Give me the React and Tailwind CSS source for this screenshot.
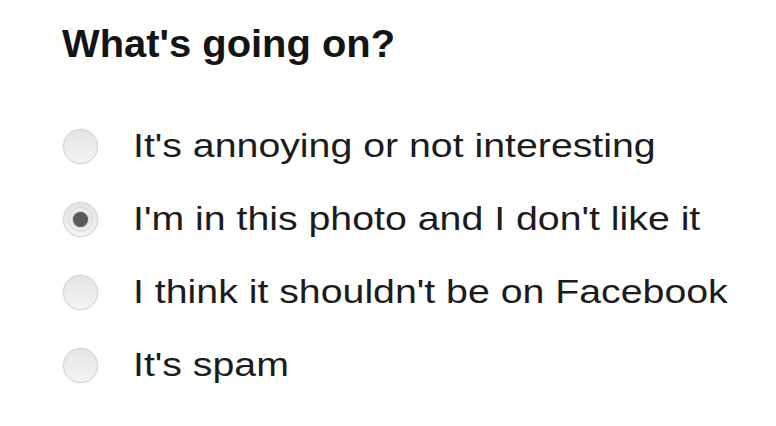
import React from "react";

const options = [
  { label: "It's annoying or not interesting", checked: false },
  { label: "I'm in this photo and I don't like it", checked: true },
  { label: "I think it shouldn't be on Facebook", checked: false },
  { label: "It's spam", checked: false },
];

function Radio({ checked }) {
  return (
    <div className="w-[35px] h-[35px] shrink-0 rounded-full border border-[#cfcfcf] bg-gradient-to-b from-[#e4e4e4] to-[#f4f4f4] shadow-[0_0_2px_rgba(0,0,0,0.12)] flex items-center justify-center">
      {checked && (
        <div className="w-[25px] h-[25px] rounded-full bg-[#ececec] border border-[#d6d6d6] flex items-center justify-center">
          <div className="w-[15px] h-[15px] rounded-full bg-[#5a5a5a] shadow-[0_0_2px_rgba(0,0,0,0.4)]" />
        </div>
      )}
    </div>
  );
}

export default function App() {
  return (
    <div
      className="w-[776px] h-[426px] bg-white pl-[62px] pt-[22px]"
      style={{ fontFamily: "'Liberation Sans', Arial, sans-serif" }}
    >
      <h1 className="text-[38px] leading-[44px] font-bold text-[#141414]">
        <span className="inline-block origin-left scale-x-[1.05]">What's going on?</span>
      </h1>
      <div className="mt-[44px] flex flex-col">
        {options.map((o) => (
          <div key={o.label} className="h-[73px] flex items-center">
            <div className="pl-[1px]">
              <Radio checked={o.checked} />
            </div>
            <span className="ml-[35px] -mt-[4px] inline-block origin-left scale-x-[1.155] text-[34px] leading-[34px] text-[#1c1c1c] whitespace-nowrap">
              {o.label}
            </span>
          </div>
        ))}
      </div>
    </div>
  );
}
